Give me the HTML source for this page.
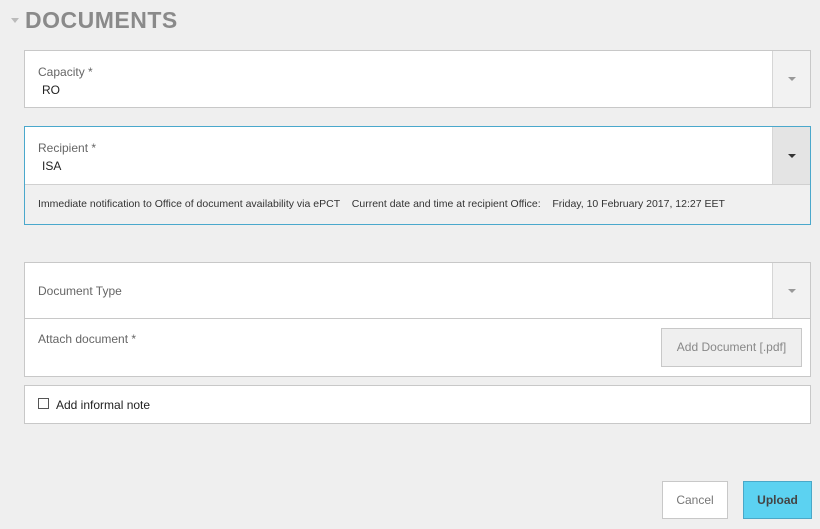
<!DOCTYPE html>
<html><head><style>
*{box-sizing:border-box;margin:0;padding:0}
body{width:820px;height:529px;background:#efefef;font-family:"Liberation Sans",sans-serif;position:relative;overflow:hidden;color:#333}
.abs{position:absolute}
.box{position:absolute;background:#fff;border:1px solid #c8c8c8}
.lbl{position:absolute;font-size:12px;color:#666}
.val{position:absolute;font-size:12px;color:#222}
.dd{position:absolute;top:0;right:0;width:38px;bottom:0;background:#f2f2f2;border-left:1px solid #d6d6d6}
.tri{position:absolute;left:15px;top:50%;margin-top:-2px;width:0;height:0;border-left:4px solid transparent;border-right:4px solid transparent;border-top:4px solid #999}
</style></head><body>
<div class="abs" style="left:11px;top:18px;width:0;height:0;border-left:4px solid transparent;border-right:4px solid transparent;border-top:5px solid #bbb"></div>
<div class="abs" style="left:25px;top:7px;font-size:23px;font-weight:bold;color:#8a8a8a;letter-spacing:0.5px">DOCUMENTS</div>

<div class="box" style="left:24px;top:50px;width:787px;height:58px">
<div class="lbl" style="left:13px;top:14px">Capacity *</div>
<div class="val" style="left:17px;top:32px">RO</div>
<div class="dd"><div class="tri"></div></div>
</div>

<div class="box" style="left:24px;top:126px;width:787px;height:99px;border-color:#4aa8cc;background:#f0f0f0">
<div class="abs" style="left:0;top:0;right:0;height:58px;background:#fff;border-bottom:1px solid #d0d0d0">
<div class="lbl" style="left:13px;top:14px">Recipient *</div>
<div class="val" style="left:17px;top:32px">ISA</div>
<div class="dd" style="background:#e4e4e4;right:0"><div class="tri" style="border-top-color:#333"></div></div>
</div>
<div class="abs" style="left:13px;top:71px;font-size:10.5px;color:#333;white-space:nowrap">Immediate notification to Office of document availability via ePCT&nbsp;&nbsp;&nbsp; Current date and time at recipient Office:&nbsp;&nbsp;&nbsp; Friday, 10 February 2017, 12:27 EET</div>
</div>

<div class="box" style="left:24px;top:262px;width:787px;height:115px">
<div class="abs" style="left:0;top:0;right:0;height:56px;border-bottom:1px solid #c8c8c8">
<div class="lbl" style="left:13px;top:21px">Document Type</div>
<div class="dd"><div class="tri"></div></div>
</div>
<div class="lbl" style="left:13px;top:69px">Attach document *</div>
<div class="abs" style="left:636px;top:65px;width:141px;height:39px;background:#efefef;border:1px solid #c8c8c8;font-size:12px;color:#888;text-align:center;line-height:37px">Add Document [.pdf]</div>
</div>

<div class="box" style="left:24px;top:385px;width:787px;height:39px">
<div class="abs" style="left:13px;top:12px;width:11px;height:11px;border:1px solid #555;background:#fff"></div>
<div class="val" style="left:31px;top:12px">Add informal note</div>
</div>

<div class="abs" style="left:662px;top:481px;width:66px;height:38px;background:#fff;border:1px solid #c8c8c8;font-size:12px;color:#777;text-align:center;line-height:36px">Cancel</div>
<div class="abs" style="left:743px;top:481px;width:69px;height:38px;background:#5cd2f1;border:1px solid #4aa8c8;font-size:12px;font-weight:bold;color:#444;text-align:center;line-height:36px">Upload</div>
</body></html>
